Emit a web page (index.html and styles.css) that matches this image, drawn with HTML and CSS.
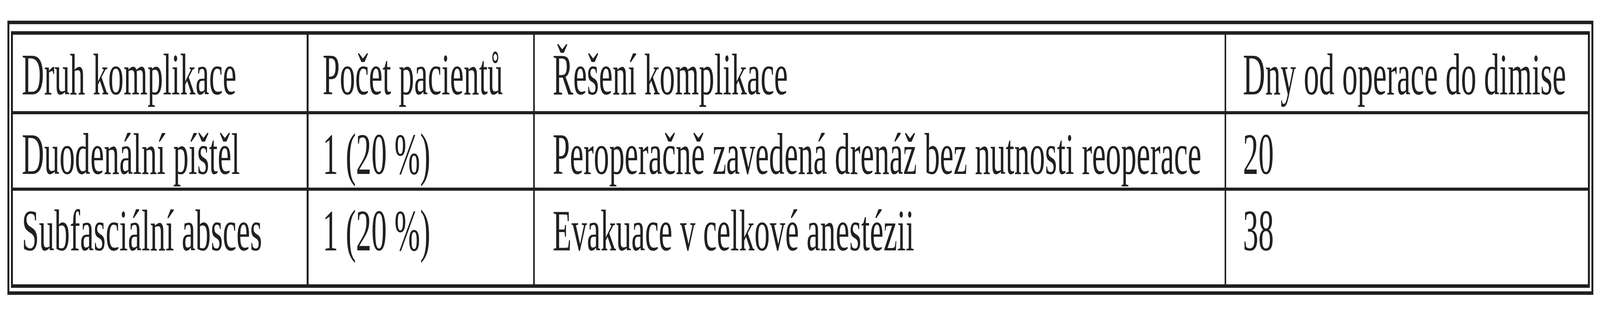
FILE: index.html
```html
<!DOCTYPE html>
<html lang="cs">
<head>
<meta charset="utf-8">
<title>Komplikace</title>
<link rel="stylesheet" href="styles.css">
</head>
<body>
<div class="frame">
  <div class="table">
    <div class="cell c1"><span class="t">Druh komplikace</span></div>
    <div class="cell c2"><span class="t">Počet pacientů</span></div>
    <div class="cell c3"><span class="t">Řešení komplikace</span></div>
    <div class="cell c4"><span class="t">Dny od operace do dimise</span></div>

    <div class="cell c1"><span class="t">Duodenální píštěl</span></div>
    <div class="cell c2"><span class="t">1 (20 %)</span></div>
    <div class="cell c3"><span class="t">Peroperačně zavedená drenáž bez nutnosti reoperace</span></div>
    <div class="cell c4"><span class="t">20</span></div>

    <div class="cell c1"><span class="t">Subfasciální absces</span></div>
    <div class="cell c2"><span class="t">1 (20 %)</span></div>
    <div class="cell c3"><span class="t">Evakuace v celkové anestézii</span></div>
    <div class="cell c4"><span class="t">38</span></div>
  </div>
</div>
<script src="app.js"></script>
</body>
</html>
```

FILE: styles.css
```css
:root {
  --u: calc(100vw / 7796);
  --sx: 1;
  --ink: #231f20;
  --side: calc(var(--u) * 9 + 0.5px);
}

html, body {
  margin: 0;
  padding: 0;
  background: #ffffff;
}

body {
  font-family: "Liberation Serif", "Times New Roman", serif;
  color: var(--ink);
}

.frame {
  margin: 53px 0 0 calc(var(--u) * 36);
  width: max-content;
  border-style: solid;
  border-color: var(--ink);
  border-width: 9px var(--side);
  padding: 18px calc(var(--u) * 8) 9px calc(var(--u) * 8);
  background: #ffffff;
}

.table {
  display: grid;
  grid-template-columns:
    calc(var(--u) * 1432)
    calc(var(--u) * 1094)
    calc(var(--u) * 3361)
    calc(var(--u) * 1761);
  grid-template-rows: 196px 188px 240px;
  column-gap: calc(var(--u) * 8.5);
  row-gap: 8px;
  background: var(--ink);
  border-style: solid;
  border-color: var(--ink);
  border-width: 9px var(--side);
}

.cell {
  background: #ffffff;
  font-size: 150px;
  line-height: 172px;
  padding-top: 16px;
  white-space: nowrap;
  box-sizing: border-box;
  overflow: hidden;
}

.t {
  display: inline-block;
  transform-origin: 0 0;
  transform: scaleX(var(--sx));
}

.c1 { padding-left: calc(var(--u) * 43); }
.c2 { padding-left: calc(var(--u) * 69); }
.c3 { padding-left: calc(var(--u) * 87); }
.c4 { padding-left: calc(var(--u) * 80); }
```

FILE: app.js
```js
function fitWidth() {
  var ratio = window.innerWidth / 7796;
  document.documentElement.style.setProperty('--sx', String(ratio));
}
fitWidth();
window.addEventListener('resize', fitWidth);
```
